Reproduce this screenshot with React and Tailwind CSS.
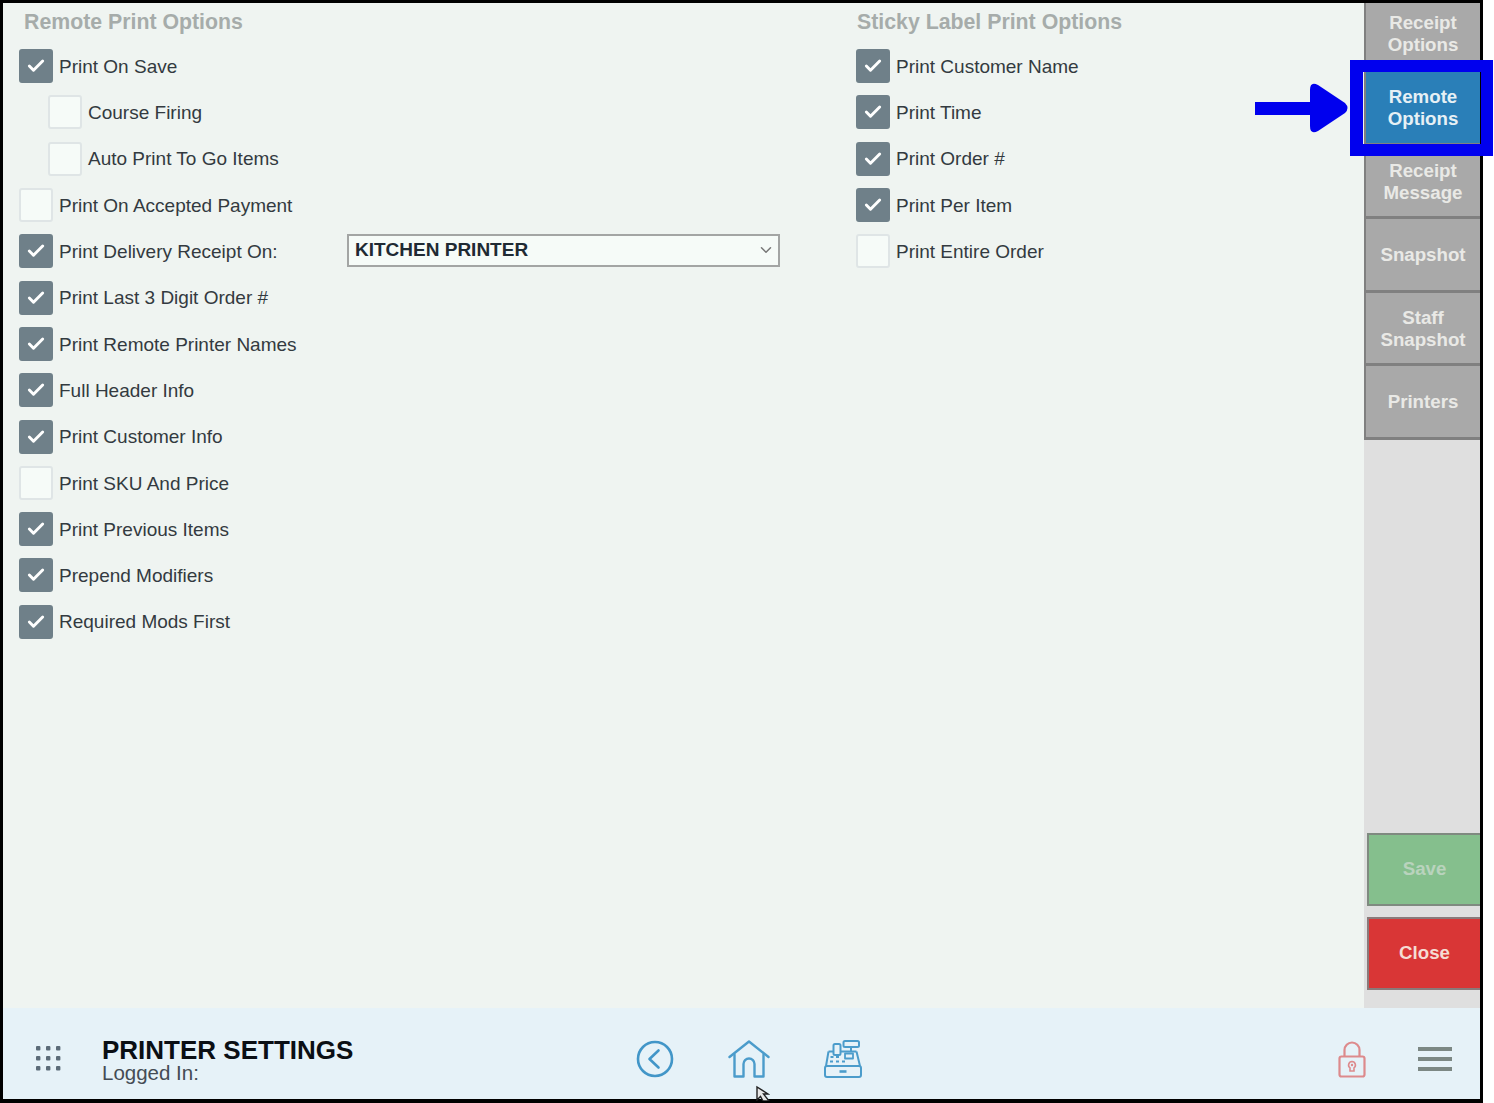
import React from "react";
import { Check, ChevronDown } from "lucide-react";

const remoteOptions = [
  { label: "Print On Save", checked: true },
  { label: "Course Firing", checked: false, nested: true },
  { label: "Auto Print To Go Items", checked: false, nested: true },
  { label: "Print On Accepted Payment", checked: false },
  { label: "Print Delivery Receipt On:", checked: true, select: true },
  { label: "Print Last 3 Digit Order #", checked: true },
  { label: "Print Remote Printer Names", checked: true },
  { label: "Full Header Info", checked: true },
  { label: "Print Customer Info", checked: true },
  { label: "Print SKU And Price", checked: false },
  { label: "Print Previous Items", checked: true },
  { label: "Prepend Modifiers", checked: true },
  { label: "Required Mods First", checked: true },
];

const stickyOptions = [
  { label: "Print Customer Name", checked: true },
  { label: "Print Time", checked: true },
  { label: "Print Order #", checked: true },
  { label: "Print Per Item", checked: true },
  { label: "Print Entire Order", checked: false },
];

const tabs = [
  { label: ["Receipt", "Options"], first: true },
  { label: ["Remote", "Options"], active: true },
  { label: ["Receipt", "Message"] },
  { label: ["Snapshot"] },
  { label: ["Staff", "Snapshot"] },
  { label: ["Printers"] },
];

const OptionRow = ({ option }) => (
  <div className={`flex h-[46.3px] items-center ${option.nested ? "pl-[29px]" : ""}`}>
    <div
      className={`flex h-[34px] w-[34px] shrink-0 items-center justify-center rounded-[3px] border-2 ${
        option.checked
          ? "border-[#6f8089] bg-[#6f8089]"
          : "border-[#dfe5e6] bg-[#f6fbf8]"
      }`}
    >
      {option.checked && <Check className="h-[20px] w-[20px] text-white" strokeWidth={3.5} />}
    </div>
    <span
      className={`ml-[6px] whitespace-nowrap pt-[2px] text-[19px] text-[#333a40] ${
        option.select ? "w-[288px]" : ""
      }`}
    >
      {option.label}
    </span>
    {option.select && (
      <div className="mb-[2px] flex h-[33px] w-[433px] shrink-0 items-center justify-between border-2 border-[#a3a5a4] bg-[#f6fbf8] pl-[6px] pr-[3px]">
        <span className="text-[19px] font-bold text-[#1f2a33]">KITCHEN PRINTER</span>
        <ChevronDown className="h-[18px] w-[18px] text-[#777]" strokeWidth={2} />
      </div>
    )}
  </div>
);

const OptionColumn = ({ title, options, className, titleClass }) => (
  <div className={className}>
    <h2 className={`mb-[3px] flex h-[37px] items-center pt-[3px] text-[21.3px] font-bold text-[#a6acaa] ${titleClass}`}>{title}</h2>
    {options.map((option) => (
      <OptionRow key={option.label} option={option} />
    ))}
  </div>
);

const GridDots = () => (
  <svg viewBox="0 0 26 26" className="h-[26px] w-[26px] text-[#5b6b78]" fill="currentColor">
    {[2, 12, 22].flatMap((y) =>
      [2, 12, 22].map((x) => <rect key={`${x}-${y}`} x={x - 2} y={y - 2} width="4.4" height="4.4" rx="1" />)
    )}
  </svg>
);

const BackIcon = () => (
  <svg viewBox="0 0 38 38" className="h-[38px] w-[38px] text-[#4296c8]" fill="none" stroke="currentColor" strokeWidth="2.6">
    <circle cx="19" cy="19" r="17" />
    <path d="M22.5 10.5 13.5 19l9 8.5" strokeLinecap="round" strokeLinejoin="round" />
  </svg>
);

const HomeIcon = () => (
  <svg viewBox="0 0 42 38" className="h-[38px] w-[42px] text-[#4b9ccb]" fill="none" stroke="currentColor" strokeWidth="2.4" strokeLinecap="round" strokeLinejoin="round">
    <path d="M1.5 17 21 1.5 40.5 17" />
    <path d="M6.5 14.500v22h9V24a5.500 5.500 0 0 1 11 0v12.500h9v-22" />
  </svg>
);

const RegisterIcon = () => (
  <svg viewBox="0 0 38 38" className="h-[38px] w-[38px] text-[#4b9ccb]" fill="none" stroke="currentColor" strokeWidth="2" strokeLinejoin="round">
    <rect x="9.500" y="4" width="7" height="11" rx="1.500" />
    <rect x="19.500" y="1" width="15.500" height="6" rx="1.500" />
    <path d="M27 7v4" />
    <path d="M4.500 11.500h5M16.500 11.500h16" />
    <path d="M4.500 11.500 2 26M32.500 11.500 36 26" />
    <rect x="1" y="26" width="36" height="11" rx="2" />
    <path d="M15.500 31.500h7" strokeWidth="2.600" />
    <path d="M6.500 17h3M12 17h3M6 21.500h3M12 21.500h3M18 21.500h3" strokeWidth="2" />
    <rect x="21" y="13.500" width="8" height="5" strokeWidth="1.800" />
  </svg>
);

const LockIcon = () => (
  <svg viewBox="0 0 28 37" className="h-[37px] w-[28px] text-[#dd8a8c]" fill="none" stroke="currentColor" strokeWidth="2.2">
    <path d="M6.500 16V9a7.500 7.500 0 0 1 15 0v7" />
    <rect x="1.500" y="15.500" width="25" height="20" rx="2" />
    <path d="M14 20.500a3.500 3.500 0 0 0-2 6.300V30h4v-3.200a3.500 3.500 0 0 0-2-6.300z" strokeWidth="1.600" />
    <circle cx="14" cy="24" r="1.200" fill="currentColor" stroke="none" />
  </svg>
);

const Cursor = () => (
  <svg viewBox="0 0 16 16" className="absolute left-[754px] top-[1085px] h-[16px] w-[16px]">
    <path d="M3 2v13l3.500-3.500L9 16h6L9.500 9H14z" fill="#e8e8e8" stroke="#222" strokeWidth="1.400" />
  </svg>
);

const App = () => (
  <div className="relative h-[1103px] w-[1494px] overflow-hidden bg-white font-['Liberation_Sans',Arial,sans-serif]">
    <div className="flex h-full w-[1483px] flex-col border-[3px] border-b-4 border-black">
      <div className="flex min-h-0 flex-1">
        <main className="flex flex-1 bg-[#eff4f1] pl-[16px]">
          <OptionColumn title="Remote Print Options" options={remoteOptions} className="w-[837px]" titleClass="ml-[5px]" />
          <OptionColumn title="Sticky Label Print Options" options={stickyOptions} titleClass="ml-[1px]" />
        </main>

        <aside className="flex w-[116px] shrink-0 flex-col bg-[#dfdfdf]">
          {tabs.map((tab) => (
            <div
              key={tab.label.join(" ")}
              className={`flex flex-col items-center justify-center border-b-[3px] border-l-2 border-[#808080] text-center text-[18.7px] font-bold leading-[22px] ${
                tab.first ? "h-[69px] pb-[5px]" : "h-[73.5px] pt-[2px]"
              } ${tab.active ? "bg-[#2a7fb8] text-[#e6f0f5]" : "bg-[#a9a9a9] text-[#e9e9e6]"}`}
            >
              {tab.label.map((line) => (
                <span key={line}>{line}</span>
              ))}
            </div>
          ))}
          <div className="mt-auto flex flex-col gap-[11px] pb-[18px] pl-[3px]">
            <div className="flex h-[73px] items-center justify-center border-2 border-r-0 border-[#7f8a80] bg-[#85bf8d] text-[18.7px] font-bold text-[#b9d3bd]">
              Save
            </div>
            <div className="flex h-[73px] items-center justify-center border-2 border-r-0 border-[#8a7a7a] bg-[#d93636] text-[18.7px] font-bold text-[#f5dcd3]">
              Close
            </div>
          </div>
        </aside>
      </div>

      <footer className="flex h-[91px] shrink-0 items-center bg-[#e6f2f8] pl-[33px] pr-[28px] pt-[11px]">
        <GridDots />
        <div className="ml-[40px] w-[300px] pt-[3px]">
          <div className="text-[26px] font-bold leading-[24px] text-[#0b0f14]">PRINTER SETTINGS</div>
          <div className="text-[20.5px] leading-[22px] text-[#444c55]">Logged In:</div>
        </div>
        <div className="ml-[234px] flex items-center gap-[54px]">
          <BackIcon />
          <HomeIcon />
          <RegisterIcon />
        </div>
        <div className="ml-auto flex items-center gap-[52px]">
          <LockIcon />
          <div className="flex w-[34px] flex-col gap-[6px]">
            <span className="h-[4px] bg-[#7c8884]" />
            <span className="h-[4px] bg-[#7c8884]" />
            <span className="h-[4px] bg-[#7c8884]" />
          </div>
        </div>
      </footer>
    </div>

    {/* annotation drawn over the screenshot */}
    <div className="absolute left-[1350px] top-[60px] h-[96px] w-[143px] border-[12px] border-l-[13px] border-[#0000ee]" />
    <svg viewBox="0 0 94 52" className="absolute left-[1255px] top-[82px] h-[52px] w-[94px]">
      <path d="M0 20H55V8Q55-1 63 3L90 21Q95 26 90 31L63 49Q55 53 55 44V33H0z" fill="#0000ee" />
    </svg>
    <Cursor />
  </div>
);

export default App;
